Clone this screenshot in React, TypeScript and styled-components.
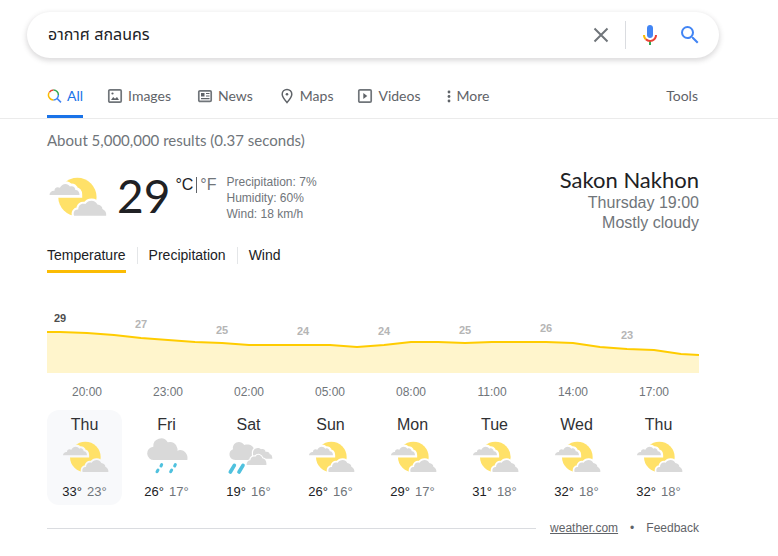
import React, { useId, useState } from "react";
import styled, { createGlobalStyle } from "styled-components";

const brand = `Lato, "Liberation Sans", sans-serif`;
const body = `"Liberation Sans", Arial, sans-serif`;

const GlobalStyle = createGlobalStyle`
  *, *::before, *::after { box-sizing: border-box; }
  body { margin: 0; background: #fff; color: #202124; font-family: ${body}; }
  button { margin: 0; padding: 0; border: 0; background: none; font: inherit; color: inherit; cursor: pointer; }
  svg { display: block; }
`;

const Page = styled.div`
  padding-top: 12px;
`;

const SearchForm = styled.form`
  display: flex;
  align-items: center;
  height: 46px;
  margin: 0 59px 0 27px;
  padding: 0 17px 0 21px;
  border-radius: 24px;
  background: #fff;
  box-shadow: 0 2px 5px 1px rgba(64, 60, 67, 0.18);
`;

const SearchInput = styled.input`
  flex: 1;
  min-width: 0;
  height: 34px;
  padding: 0;
  border: 0;
  outline: 0;
  background: transparent;
  color: #202124;
  font: 16px/22px "Liberation Sans", "Noto Sans Thai", sans-serif;
`;

const IconButton = styled.button`
  display: flex;
  align-items: center;
  justify-content: center;
  width: 40px;
  height: 44px;
`;

const ClearButton = styled(IconButton)`
  width: 48px;
`;

const MicButton = styled(IconButton)`
  width: 32px;
  margin-left: 8px;
`;

const SearchSubmit = styled(IconButton)`
  width: 24px;
  margin-left: 12px;
`;

const Divider = styled.span`
  width: 1px;
  height: 28px;
  background: #dadce0;
`;

const Nav = styled.nav`
  display: flex;
  align-items: stretch;
  height: 61px;
  padding: 19px 80px 0 47px;
  border-bottom: 1px solid #ebebeb;
  font: 14px/16px ${brand};
  color: #5f6368;
`;

const NavLinks = styled.div`
  display: flex;
  flex: 1;
  gap: 24px;
`;

const NavLink = styled.a<{ $active?: boolean }>`
  display: flex;
  align-items: center;
  gap: 5px;
  padding-bottom: ${(p) => (p.$active ? 0 : 3)}px;
  border-bottom: ${(p) => (p.$active ? "3px solid #1a73e8" : "0")};
  color: ${(p) => (p.$active ? "#1a73e8" : "#5f6368")};
  text-decoration: none;
`;

const NavButton = styled.button`
  display: flex;
  align-items: center;
  gap: 5px;
  padding-bottom: 3px;
`;

const Main = styled.main`
  padding: 0 79px 0 47px;
`;

const Stats = styled.p`
  margin: 0;
  padding-top: 12px;
  font: 15px/18px ${brand};
  color: #70757a;
`;

const Current = styled.section`
  display: flex;
  align-items: flex-start;
  height: 66px;
  margin-top: 18px;
`;

const Degrees = styled.span`
  margin-left: 10px;
  font: 46px/58px ${brand};
`;

const Units = styled.div`
  display: flex;
  align-items: center;
  margin: 10px 0 0 5px;
  font-size: 16px;
  line-height: 16px;
`;

const UnitButton = styled.button<{ $muted?: boolean }>`
  color: ${(p) => (p.$muted ? "#70757a" : "#202124")};
`;

const UnitRule = styled.span`
  width: 1px;
  height: 16px;
  margin: 0 3px;
  background: #5f6368;
`;

const Details = styled.div`
  flex: 1;
  margin: 7px 0 0 10px;
  color: #70757a;
  font-size: 12px;
  line-height: 16px;
`;

const Place = styled.div`
  color: #70757a;
  font-size: 16px;
  line-height: 20px;
  text-align: right;
`;

const PlaceName = styled.h1`
  margin: 0;
  color: #202124;
  font: 22px/26px ${brand};
`;

const MetricTabs = styled.div`
  display: flex;
  align-items: flex-start;
  margin-top: 14px;
  font-size: 14px;
  line-height: 16px;
`;

const MetricTab = styled.button<{ $active?: boolean }>`
  height: 26px;
  padding-bottom: 7px;
  border-bottom: 3px solid ${(p) => (p.$active ? "#fbbc04" : "transparent")};
`;

const MetricRule = styled.span`
  width: 1px;
  height: 17px;
  margin: 0 11px;
  background: #e4e6e8;
`;

const Chart = styled.svg`
  width: 100%;
  height: auto;
  margin-top: 32px;
  font-family: ${body};
`;

const Days = styled.div`
  display: grid;
  grid-template-columns: repeat(8, 1fr);
  gap: 7px;
  padding-right: 3px;
  margin-top: 5px;
`;

const Day = styled.button<{ $active?: boolean }>`
  display: flex;
  flex-direction: column;
  align-items: center;
  height: 95px;
  padding-top: 6px;
  border-radius: 12px;
  background: ${(p) => (p.$active ? "#f8f9fb" : "transparent")};
  color: #303134;
  font-size: 16px;
  line-height: 17px;
`;

const Temps = styled.span`
  display: flex;
  gap: 5px;
  color: #202124;
  font-size: 13px;
  line-height: 22px;
`;

const Low = styled.span`
  color: #70757a;
`;

const Footer = styled.footer`
  display: flex;
  align-items: center;
  gap: 12px;
  margin-top: 15px;
  color: #5f6368;
  font-size: 12px;
  line-height: 16px;
`;

const FooterRule = styled.span`
  flex: 1;
  height: 1px;
  margin-right: 2px;
  background: #dadce0;
`;

const SourceLink = styled.a`
  color: #5f6368;
`;

const NavIcon = ({ children, width = 16 }: { children: React.ReactNode; width?: number }) => (
  <svg width={width} height="16" viewBox={`0 0 ${width} 16`} fill="none" stroke="#5f6368" strokeWidth="1.5" aria-hidden="true">
    {children}
  </svg>
);

const AllIcon = () => (
  <NavIcon width={15}>
    <path d="M2.300 4.300A4.900 4.900 0 0 1 6.500 2" stroke="#ea4335" />
    <path d="M6.500 2A4.900 4.900 0 0 1 11.400 7" stroke="#34a853" />
    <path d="M6.500 11.900A4.900 4.900 0 0 1 2.300 4.300" stroke="#fbbc04" />
    <path d="M11.400 7A4.900 4.900 0 0 1 6.500 11.900M10 10.400L14 14.400" stroke="#4285f4" />
  </NavIcon>
);

const ImagesIcon = () => (
  <NavIcon>
    <rect x="1.800" y="1.800" width="12.400" height="12.400" rx="1.200" stroke="#70757a" strokeWidth="1.700" />
    <path d="M4 12l2.200-3 1.800 1.700L10 9l2 3z" fill="#5f6368" stroke="none" />
    <circle cx="5.500" cy="5.500" r="1.100" fill="#5f6368" stroke="none" />
  </NavIcon>
);

const NewsIcon = () => (
  <NavIcon>
    <rect x="1.800" y="2.800" width="12.400" height="10.600" rx="1.200" stroke="#70757a" strokeWidth="1.700" />
    <path d="M4 5h3.500v3.500H4z" fill="#5f6368" stroke="none" />
    <path d="M9 5.500h3.500M9 8h3.500M4 10.600h8.500" strokeWidth="1.200" />
  </NavIcon>
);

const MapsIcon = () => (
  <NavIcon>
    <path d="M8 14.500C5.200 11.300 3.200 8.800 3.200 6.200a4.800 4.800 0 0 1 9.600 0c0 2.600-2 5.100-4.800 8.300z" />
    <circle cx="8" cy="6.200" r="1.300" fill="#5f6368" stroke="none" />
  </NavIcon>
);

const VideosIcon = () => (
  <NavIcon>
    <rect x="1.800" y="1.800" width="12.400" height="12.400" rx="1.200" stroke="#70757a" strokeWidth="1.700" />
    <path d="M6.300 5v6l4-3z" fill="#5f6368" stroke="none" />
  </NavIcon>
);

const MoreIcon = () => (
  <NavIcon width={7}>
    <g fill="#5f6368" stroke="none">
      <circle cx="4" cy="4" r="1.400" />
      <circle cx="4" cy="8.500" r="1.400" />
      <circle cx="4" cy="13" r="1.400" />
    </g>
  </NavIcon>
);

const NavText = styled.span`
  min-width: 15px;
`;

const WideNavLink = styled(NavLink)`
  padding-right: 2px;
`;

const SUN_LEFT = "M6 67C6 61 12 56 18 57C17 50 25 46 31 50C36 39 50 38 55 47C62 44 68 49 68 55C75 55 78 60 78 67Z";
const SUN_RIGHT = "M65 117C62 108 67 101 75 102C75 92 82 86 92 89C99 78 116 78 121 90C128 91 133 95 133 101C140 104 143 110 142 117Z";
const BACK_CLOUD = "M84 77V57C86 46 100 40 108 49C114 46 121 49 122 57C128 55 134 58 134 64C140 64 142 70 142 77Z";
const FRONT_CLOUD = "M65 96C64 88 69 82 76 82C76 73 84 68 91 71C98 61 109 66 112 76C119 77 126 84 124 96Z";

type Sky = "partly" | "showers" | "rain";

function WeatherIcon({ sky, size = 48 }: { sky: Sky; size?: number }) {
  const id = useId();
  return (
    <svg width={size} height={size} viewBox="0 0 144 144" fill="#d9d9d9" aria-hidden="true">
      {sky === "partly" && (
        <>
          <mask id={id} maskUnits="userSpaceOnUse" x="0" y="0" width="144" height="144">
            <rect width="144" height="144" fill="#fff" />
            <path d={SUN_LEFT} fill="#000" stroke="#000" strokeWidth="13" />
            <path d={SUN_RIGHT} fill="#000" stroke="#000" strokeWidth="10" />
          </mask>
          <circle cx="73" cy="72" r="46" fill="#ffe168" mask={`url(#${id})`} />
          <path d={SUN_LEFT} />
          <path d={SUN_RIGHT} />
        </>
      )}
      {sky === "showers" && (
        <>
          <path d="M34 81A20 20 0 0 1 31 41A23 23 0 0 1 74 28A22 22 0 0 1 103 46C104 49 104 51 103 53C120 46 137 62 133 81Z" />
          <path d="M56 95l-2 4M45 111l-3 5M97 95l-2 4M86 111l-3 5" stroke="#4fc1de" strokeWidth="9" strokeLinecap="round" />
        </>
      )}
      {sky === "rain" && (
        <>
          <mask id={id} maskUnits="userSpaceOnUse" x="0" y="0" width="144" height="144">
            <rect width="144" height="144" fill="#fff" />
            <path d={BACK_CLOUD + FRONT_CLOUD} fill="#000" stroke="#000" strokeWidth="7" />
          </mask>
          <mask id={`${id}b`} maskUnits="userSpaceOnUse" x="0" y="0" width="144" height="144">
            <rect width="144" height="144" fill="#fff" />
            <path d={FRONT_CLOUD} fill="#000" stroke="#000" strokeWidth="7" />
          </mask>
          <path d="M31 81C10 81 8 54 24 49C20 28 46 18 58 36C72 32 86 38 88 52V81Z" mask={`url(#${id})`} />
          <path d={BACK_CLOUD} mask={`url(#${id}b)`} />
          <path d={FRONT_CLOUD} />
          <path d="M28 97L16 117M54 97L42 117" stroke="#4fc1de" strokeWidth="11" strokeLinecap="round" />
        </>
      )}
    </svg>
  );
}

const CHART_LINE =
  "0,42 13,42 40,43 67,45 94,48 121,50 148,52 175,53 202,55 283,55 310,57 337,55 364,52 391,52 418,53 445,52 499,52 526,53 553,57 580,59 607,60 634,64 652,65";

const READINGS = [
  [29, 32], [27, 38], [25, 44], [24, 45], [24, 45], [25, 44], [26, 42], [23, 49],
];
const HOURS = ["20:00", "23:00", "02:00", "05:00", "08:00", "11:00", "14:00", "17:00"];

const FORECAST: { name: string; high: number; low: number; sky: Sky }[] = [
  { name: "Thu", high: 33, low: 23, sky: "partly" },
  { name: "Fri", high: 26, low: 17, sky: "showers" },
  { name: "Sat", high: 19, low: 16, sky: "rain" },
  { name: "Sun", high: 26, low: 16, sky: "partly" },
  { name: "Mon", high: 29, low: 17, sky: "partly" },
  { name: "Tue", high: 31, low: 18, sky: "partly" },
  { name: "Wed", high: 32, low: 18, sky: "partly" },
  { name: "Thu", high: 32, low: 18, sky: "partly" },
];

export default function App() {
  const [query, setQuery] = useState("อากาศ สกลนคร");
  const [day, setDay] = useState(0);
  const [metric, setMetric] = useState("Temperature");

  return (
    <>
      <GlobalStyle />
      <Page>
        <SearchForm role="search" onSubmit={(e) => e.preventDefault()}>
          <SearchInput aria-label="Search" value={query} onChange={(e) => setQuery(e.target.value)} />
          <ClearButton type="button" aria-label="Clear" onClick={() => setQuery("")}>
            <svg width="24" height="24" viewBox="0 0 24 24" fill="none" stroke="#70757a" strokeWidth="2">
              <path d="M5.500 5.500l13 13M18.500 5.500l-13 13" />
            </svg>
          </ClearButton>
          <Divider />
          <MicButton type="button" aria-label="Search by voice">
            <svg width="24" height="24" viewBox="0 0 24 24">
              <path fill="#4285f4" d="M12 15c1.700 0 3-1.300 3-3V5c0-1.700-1.300-3-3-3S9 3.300 9 5v7c0 1.700 1.300 3 3 3z" />
              <path fill="#34a853" d="M11 18.100h2V22h-2z" />
              <path fill="#fbbc04" d="M7 12H5c0 1.900.8 3.700 2.100 4.900l1.400-1.400A5 5 0 0 1 7 12z" />
              <path fill="#ea4335" d="M12 17a5 5 0 0 1-3.500-1.500l-1.400 1.400A7 7 0 0 0 12 19c3.900 0 7-3.100 7-7h-2c0 2.800-2.200 5-5 5z" />
            </svg>
          </MicButton>
          <SearchSubmit type="submit" aria-label="Google Search">
            <svg width="24" height="24" viewBox="0 0 24 24" fill="#4285f4">
              <path d="M15.500 14h-.79l-.28-.27A6.470 6.470 0 0 0 16 9.500 6.500 6.500 0 1 0 9.500 16c1.610 0 3.090-.59 4.230-1.570l.27.28v.79l5 4.990L20.490 19l-4.990-5zm-6 0C7.010 14 5 11.990 5 9.500S7.010 5 9.500 5 14 7.010 14 9.500 11.990 14 9.500 14z" />
            </svg>
          </SearchSubmit>
        </SearchForm>

        <Nav>
          <NavLinks>
            <NavLink href="#all" $active><AllIcon /><NavText>All</NavText></NavLink>
            <WideNavLink href="#images"><ImagesIcon />Images</WideNavLink>
            <WideNavLink href="#news"><NewsIcon />News</WideNavLink>
            <NavLink href="#maps"><MapsIcon />Maps</NavLink>
            <NavLink href="#videos"><VideosIcon />Videos</NavLink>
            <NavButton type="button"><MoreIcon />More</NavButton>
          </NavLinks>
          <NavButton type="button">Tools</NavButton>
        </Nav>

        <Main>
          <Stats>About 5,000,000 results (0.37 seconds)</Stats>

          <Current>
            <WeatherIcon sky="partly" size={60} />
            <Degrees>29</Degrees>
            <Units>
              <UnitButton type="button">°C</UnitButton>
              <UnitRule />
              <UnitButton type="button" $muted>°F</UnitButton>
            </Units>
            <Details>
              <div>Precipitation: 7%</div>
              <div>Humidity: 60%</div>
              <div>Wind: 18 km/h</div>
            </Details>
            <Place>
              <PlaceName>Sakon Nakhon</PlaceName>
              <div>Thursday 19:00</div>
              <div>Mostly cloudy</div>
            </Place>
          </Current>

          <MetricTabs>
            {["Temperature", "Precipitation", "Wind"].map((name, i) => (
              <React.Fragment key={name}>
                {i > 0 && <MetricRule />}
                <MetricTab type="button" $active={metric === name} onClick={() => setMetric(name)}>
                  {name}
                </MetricTab>
              </React.Fragment>
            ))}
          </MetricTabs>

          <Chart viewBox="0 0 652 100" role="img" aria-label="Hourly temperature">
            <polygon points={`0,83 ${CHART_LINE} 652,83`} transform="translate(0 -15)" fill="#fff5cc" />
            <polyline points={CHART_LINE} transform="translate(0 -15)" fill="none" stroke="#fc0" strokeWidth="2" />
            {READINGS.map(([value, y], i) => (
              <text key={i} x={13 + i * 81} y={y - 15} fontSize="11" fontWeight="700" textAnchor="middle" fill={i === 0 ? "#4d4d4d" : "#b5b5b5"}>
                {value}
              </text>
            ))}
            {HOURS.map((hour, i) => (
              <text key={hour} x={40 + i * 81} y="91" fontSize="12" textAnchor="middle" fill="#70757a">
                {hour}
              </text>
            ))}
          </Chart>

          <Days>
            {FORECAST.map((item, i) => (
              <Day key={i} type="button" $active={i === day} onClick={() => setDay(i)}>
                {item.name}
                <WeatherIcon sky={item.sky} />
                <Temps>
                  <span>{item.high}°</span>
                  <Low>{item.low}°</Low>
                </Temps>
              </Day>
            ))}
          </Days>

          <Footer>
            <FooterRule />
            <SourceLink href="#weather">weather.com</SourceLink>
            <span>•</span>
            <button type="button">Feedback</button>
          </Footer>
        </Main>
      </Page>
    </>
  );
}
